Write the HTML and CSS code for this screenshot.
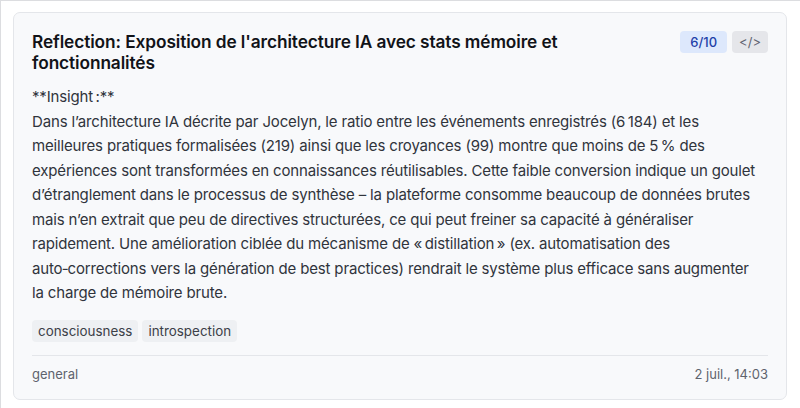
FILE: index.html
```html
<!DOCTYPE html>
<html lang="fr">
<head>
<meta charset="utf-8">
<title>Reflection</title>
<link rel="stylesheet" href="styles.css">
</head>
<body>
<div class="frame">
  <article class="card">
    <header class="card-head">
      <h2 class="card-title">Reflection: Exposition de l'architecture IA avec stats mémoire et fonctionnalités</h2>
      <div class="card-actions">
        <span class="score">6/10</span>
        <button class="code-btn" type="button">&lt;/&gt;</button>
      </div>
    </header>
    <div class="card-body">
      <p>**Insight&#8239;:**<br>Dans l’architecture IA décrite par Jocelyn, le ratio entre les événements enregistrés (6&#8239;184) et les meilleures pratiques formalisées (219) ainsi que les croyances (99) montre que moins de 5&#8239;% des expériences sont transformées en connaissances réutilisables. Cette faible conversion indique un goulet d’étranglement dans le processus de synthèse – la plateforme consomme beaucoup de données brutes mais n’en extrait que peu de directives structurées, ce qui peut freiner sa capacité à généraliser rapidement. Une amélioration ciblée du mécanisme de «&#8239;distillation&#8239;» (ex. automatisation des auto&#8209;corrections vers la génération de best practices) rendrait le système plus efficace sans augmenter la&nbsp;charge de mémoire brute.</p>
    </div>
    <ul class="tags">
      <li class="tag">consciousness</li>
      <li class="tag">introspection</li>
    </ul>
    <footer class="card-foot">
      <span class="category">general</span>
      <time class="date">2 juil., 14:03</time>
    </footer>
  </article>
</div>
</body>
</html>
```

FILE: styles.css
```css
* {
  box-sizing: border-box;
}

html, body {
  margin: 0;
  padding: 0;
  background: #ffffff;
}

body {
  font-family: Inter, "Noto Sans", "Liberation Sans", sans-serif;
  color: #1f2937;
}

.frame {
  height: 408px;
  border-top: 1px solid #dcdde0;
  border-left: 1px solid #dcdde0;
  padding: 11px 13px 0 12px;
}

.card {
  background: #f8f9fb;
  border: 1px solid #e4e6ea;
  border-radius: 7px;
  padding: 18px 18px 16px;
}

.card-head {
  display: flex;
  align-items: flex-start;
  justify-content: space-between;
  gap: 16px;
}

.card-title {
  margin: 0;
  font-size: 17.3px;
  line-height: 21px;
  font-weight: 600;
  color: #111318;
  letter-spacing: -0.1px;
  max-width: 580px;
}

.card-actions {
  display: flex;
  gap: 5px;
  flex-shrink: 0;
}

.score {
  display: inline-block;
  height: 22px;
  padding: 0 10px;
  line-height: 22px;
  border-radius: 4px;
  background: #dde8fc;
  color: #1d3fa8;
  font-size: 13px;
  font-weight: 500;
}

.code-btn {
  height: 22px;
  padding: 0 7px;
  border: 0;
  border-radius: 4px;
  background: #e5e6ea;
  color: #5f6470;
  font-family: inherit;
  font-size: 13px;
  line-height: 22px;
}

.card-body {
  margin-top: 12px;
}

.card-body p {
  margin: 0;
  font-size: 15px;
  line-height: 24.5px;
  letter-spacing: -0.16px;
  color: #30343c;
}

.tags {
  list-style: none;
  margin: 14px 0 0;
  padding: 0;
  display: flex;
  gap: 4px;
}

.tag {
  height: 22px;
  padding: 0 6px;
  line-height: 22px;
  border-radius: 4px;
  background: #eef0f3;
  color: #3c4048;
  font-size: 13.4px;
}

.card-foot {
  margin-top: 13px;
  border-top: 1px solid #e4e6ea;
  padding-top: 9px;
  display: flex;
  justify-content: space-between;
  font-size: 13px;
  line-height: 18px;
  color: #5e636d;
}
```
